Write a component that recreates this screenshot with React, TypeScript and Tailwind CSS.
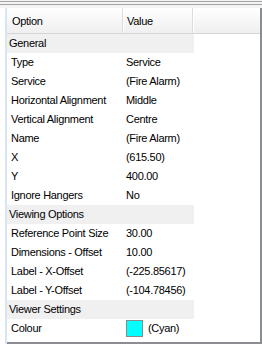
import React from "react";

type Row = { cat?: string; name?: string; value?: string; swatch?: boolean };

const rows: Row[] = [
  { cat: "General" },
  { name: "Type", value: "Service" },
  { name: "Service", value: "(Fire Alarm)" },
  { name: "Horizontal Alignment", value: "Middle" },
  { name: "Vertical Alignment", value: "Centre" },
  { name: "Name", value: "(Fire Alarm)" },
  { name: "X", value: "(615.50)" },
  { name: "Y", value: "400.00" },
  { name: "Ignore Hangers", value: "No" },
  { cat: "Viewing Options" },
  { name: "Reference Point Size", value: "30.00" },
  { name: "Dimensions - Offset", value: "10.00" },
  { name: "Label - X-Offset", value: "(-225.85617)" },
  { name: "Label - Y-Offset", value: "(-104.78456)" },
  { cat: "Viewer Settings" },
  { name: "Colour", value: "(Cyan)", swatch: true },
];

export default function App() {
  return (
    <div
      className="w-[262px] h-[344px] bg-white flex flex-col overflow-hidden text-[11px] tracking-[-0.3px] text-black"
      style={{ fontFamily: '"Liberation Sans", Arial, sans-serif' }}
    >
      <div className="h-[8px] bg-[#f4f4f4] flex flex-col">
        <div className="h-[1px]" />
        <div className="h-[1px] bg-[#a5a5a5]" />
        <div className="h-[2px]" />
        <div className="h-[1px] bg-[#a5a5a5]" />
      </div>
      <div className="flex-1 flex">
        <div className="w-[5px] bg-white" />
        <div className="w-[2px] bg-[#d9e5f4]" />
        <div className="flex-1 flex flex-col border-r-2 border-b-2 border-[#8c8d92]">
          <div className="h-[26px] flex bg-gradient-to-b from-white to-[#efefef] border-b border-[#d5d5d5]">
            <div className="w-[116px] flex items-center pl-[5px] pt-[2px] border-r border-[#dcdcdc]">Option</div>
            <div className="w-[1px] bg-white" />
            <div className="w-[69px] flex items-center pl-[3px] pt-[2px] border-r border-[#dcdcdc]">Value</div>
            <div className="w-[1px] bg-white" />
            <div className="flex-1" />
          </div>
          {rows.map((r, i) =>
            r.cat ? (
              <div key={i} className="h-[19px] flex">
                <div className="w-[187px] bg-[#f0f0f0] flex items-center pl-[2px]">{r.cat}</div>
              </div>
            ) : (
              <div key={i} className="h-[19px] flex">
                <div className="w-[117px] flex items-center pl-[4px]">{r.name}</div>
                <div className="flex-1 flex items-center pl-[2px]">
                  {r.swatch ? (
                    <>
                      <div className="w-[17px] h-[17px] bg-[#00ffff] border border-[#8a8a8a] mr-[5px]" />
                      {r.value}
                    </>
                  ) : (
                    r.value
                  )}
                </div>
              </div>
            )
          )}
        </div>
      </div>
    </div>
  );
}
